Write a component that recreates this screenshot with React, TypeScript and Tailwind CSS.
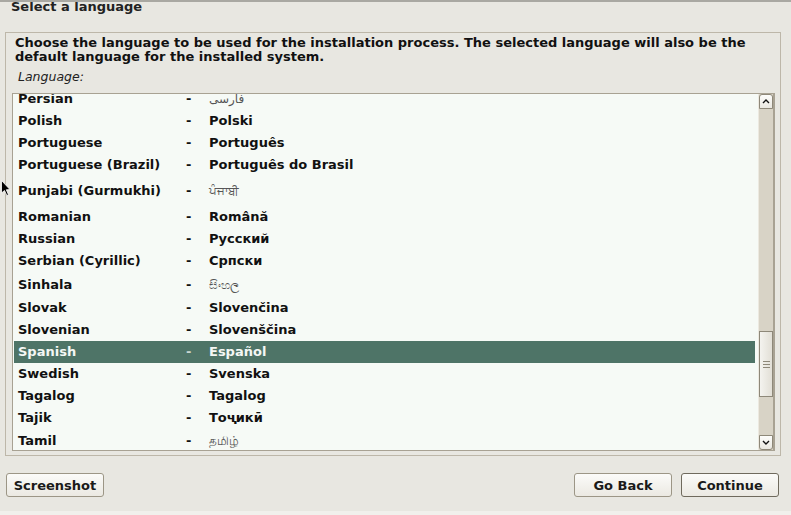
import React from "react";

type Lang = { name: string; native: string; h: number; script?: boolean };

const languages: Lang[] = [
  { name: "Persian", native: "فارسی", h: 22, script: true },
  { name: "Polish", native: "Polski", h: 22 },
  { name: "Portuguese", native: "Português", h: 22 },
  { name: "Portuguese (Brazil)", native: "Português do Brasil", h: 22 },
  { name: "Punjabi (Gurmukhi)", native: "ਪੰਜਾਬੀ", h: 30, script: true },
  { name: "Romanian", native: "Română", h: 22 },
  { name: "Russian", native: "Русский", h: 22 },
  { name: "Serbian (Cyrillic)", native: "Српски", h: 22 },
  { name: "Sinhala", native: "සිංහල", h: 25, script: true },
  { name: "Slovak", native: "Slovenčina", h: 22 },
  { name: "Slovenian", native: "Slovenščina", h: 22 },
  { name: "Spanish", native: "Español", h: 22 },
  { name: "Swedish", native: "Svenska", h: 22 },
  { name: "Tagalog", native: "Tagalog", h: 22 },
  { name: "Tajik", native: "Тоҷикӣ", h: 22 },
  { name: "Tamil", native: "தமிழ்", h: 24, script: true },
];

const selected = "Spanish";

function Button({ label, primary }: { label: string; primary?: boolean }) {
  return (
    <button
      className={`h-[24px] w-[98px] rounded-[3px] border bg-gradient-to-b from-[#fbfbf9] to-[#ebe9e2] text-[13px] font-bold leading-none text-[#1a1a1a] ${
        primary ? "border-[#6f6a5d]" : "border-[#9c9686]"
      }`}
    >
      {label}
    </button>
  );
}

function Scrollbar() {
  return (
    <div className="flex w-[16px] flex-col border-l border-[#ece9e0] bg-[#d8d3c6] border-r border-r-[#a8a293]">
      <div className="flex h-[15px] items-center justify-center rounded-t-[3px] border border-[#8e8879] bg-gradient-to-b from-[#fdfdfb] to-[#e9e7e0]">
        <svg width="8" height="5" viewBox="0 0 8 5">
          <path d="M1 4 L4 1 L7 4" stroke="#111" strokeWidth="1.4" fill="none" />
        </svg>
      </div>
      <div className="h-[222px]" />
      <div className="flex h-[66px] flex-col items-center justify-center gap-[2px] border border-[#8e8879] bg-gradient-to-r from-[#f4f3ef] to-[#e2dfd6]">
        <div className="h-px w-[7px] bg-[#8e8879]" />
        <div className="h-px w-[7px] bg-[#8e8879]" />
        <div className="h-px w-[7px] bg-[#8e8879]" />
      </div>
      <div className="flex-1" />
      <div className="flex h-[15px] items-center justify-center rounded-b-[3px] border border-[#8e8879] bg-gradient-to-b from-[#fdfdfb] to-[#e9e7e0]">
        <svg width="8" height="5" viewBox="0 0 8 5">
          <path d="M1 1 L4 4 L7 1" stroke="#111" strokeWidth="1.4" fill="none" />
        </svg>
      </div>
    </div>
  );
}

export default function App() {
  return (
    <div
      className="relative flex h-[515px] w-[791px] flex-col overflow-hidden border-t-2 border-[#a9a8a2] bg-[#e8e7e1] text-[#111]"
      style={{ fontFamily: '"DejaVu Sans", Verdana, sans-serif' }}
    >
      <div className="h-[30px] pl-[11px] text-[13px] font-bold leading-[10px] text-[#222]">
        Select a language
      </div>

      <div className="ml-[5px] flex h-[424px] w-[776px] flex-col border border-[#bdb7a9] px-[6px] pt-[3px]">
        <p className="pl-[3px] text-[13px] font-bold leading-[14px]">
          Choose the language to be used for the installation process. The selected language will also be the
          default language for the installed system.
        </p>
        <p className="mt-[5px] pl-[6px] text-[12.5px] italic leading-[16px] text-[#222]">Language:</p>

        <div className="mt-[8px] flex h-[358px] w-[763px] border border-[#a8a293] bg-[#f6faf6]">
          <div className="flex-1 overflow-hidden">
            <div className="-mt-[6px] ml-px w-[741px]">
              {languages.map((l) => {
                const sel = l.name === selected;
                return (
                  <div
                    key={l.name}
                    className={`flex items-center pl-[4px] text-[13px] font-bold ${
                      sel ? "bg-[#4e7467] text-[#f4f7f4]" : "text-[#111]"
                    }`}
                    style={{ height: l.h }}
                  >
                    <span className="w-[168px]">{l.name}</span>
                    <span className={`w-[23px] ${sel ? "text-[#c9d6d0]" : ""}`}>-</span>
                    <span
                      className={l.script ? "text-[12px] font-normal text-[#555]" : ""}
                      style={l.script ? { fontFamily: '"Noto Sans", "DejaVu Sans", sans-serif' } : undefined}
                    >
                      {l.native}
                    </span>
                  </div>
                );
              })}
            </div>
          </div>
          <Scrollbar />
        </div>
      </div>

      <div className="mt-[17px] flex px-[6px]">
        <Button label="Screenshot" />
        <div className="flex-1" />
        <div className="mr-[6px] flex gap-[9px]">
          <Button label="Go Back" />
          <Button label="Continue" primary />
        </div>
      </div>

      <div className="mt-auto h-[4px] bg-[#f1f0ec]" />

      <svg className="absolute left-[1px] top-[178px]" width="10" height="17" viewBox="0 0 10 17">
        <path d="M0.5 0.5 L0.5 13 L3.5 10.5 L5.8 15.5 L7.5 14.7 L5.3 9.8 L9 9.6 Z" fill="#000" stroke="#fff" strokeWidth="0.8" />
      </svg>
    </div>
  );
}
